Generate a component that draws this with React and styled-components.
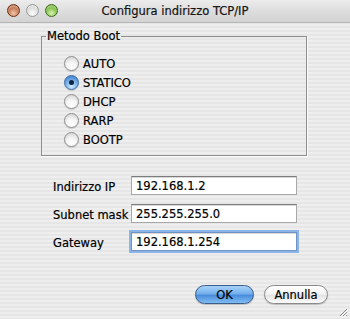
import React from "react";
import styled, { createGlobalStyle, css } from "styled-components";

const bootOptions = ["AUTO", "STATICO", "DHCP", "RARP", "BOOTP"];

const fields = [
  { label: "Indirizzo IP", value: "192.168.1.2" },
  { label: "Subnet mask", value: "255.255.255.0" },
  { label: "Gateway", value: "192.168.1.254", focused: true },
];

export default function App() {
  return (
    <>
      <GlobalStyle />
      <WindowStyle>
        <TitleBarStyle>
          <LightsStyle>
            <LightStyle $color="red" />
            <LightStyle $color="grey" />
            <LightStyle $color="green" />
          </LightsStyle>
          <TitleStyle>Configura indirizzo TCP/IP</TitleStyle>
          <span />
        </TitleBarStyle>

        <BodyStyle>
          <GroupBoxStyle>
            <LegendStyle>Metodo Boot</LegendStyle>
            <RadioListStyle>
              {bootOptions.map((opt) => (
                <RadioRowStyle key={opt}>
                  <RadioStyle $checked={opt === "STATICO"} />
                  {opt}
                </RadioRowStyle>
              ))}
            </RadioListStyle>
          </GroupBoxStyle>

          <FormStyle>
            {fields.map((f) => (
              <React.Fragment key={f.label}>
                <LabelStyle>{f.label}</LabelStyle>
                <FieldStyle readOnly value={f.value} $focused={f.focused} />
              </React.Fragment>
            ))}
          </FormStyle>

          <ButtonRowStyle>
            <ButtonStyle $primary $width={59}>OK</ButtonStyle>
            <ButtonStyle $width={64}>Annulla</ButtonStyle>
          </ButtonRowStyle>
        </BodyStyle>

        <GripStyle>
          <svg width="9" height="9" viewBox="0 0 9 9">
            <path d="M8 1 L1 8 M8 4 L4 8 M8 7 L7 8" stroke="#8a8a8a" strokeWidth="1" />
            <path d="M9 2 L2 9 M9 5 L5 9" stroke="#ffffff" strokeWidth="1" />
          </svg>
        </GripStyle>
      </WindowStyle>
    </>
  );
}

const GlobalStyle = createGlobalStyle`
  html, body {
    margin: 0;
    padding: 0;
  }
  body {
    font-family: "DejaVu Sans", "Liberation Sans", sans-serif;
    color: #000;
    -webkit-text-stroke: 0.2px #000;
  }
`;

const pinstripe = css`
  background: repeating-linear-gradient(
    to bottom,
    #eeeeee 0px,
    #eeeeee 2px,
    #e6e6e6 2px,
    #e6e6e6 4px
  );
  background-attachment: fixed;
`;

const WindowStyle = styled.div`
  position: relative;
  width: 350px;
  height: 319px;
  overflow: hidden;
  display: flex;
  flex-direction: column;
  ${pinstripe}
`;

const TitleBarStyle = styled.div`
  height: 21px;
  display: grid;
  grid-template-columns: 1fr auto 1fr;
  align-items: center;
  padding-bottom: 1px;
  background: linear-gradient(#ececec, #dcdcdc 55%, #d3d3d3);
  border-bottom: 1px solid #b5b5b5;
`;

const LightsStyle = styled.div`
  display: flex;
  gap: 6px;
  padding-left: 7px;
`;

const lightColors = {
  red: ["#f2c6a8", "#b8643f", "#6e3518"],
  grey: ["#ffffff", "#d4d4d4", "#9a9a9a"],
  green: ["#d9f2b0", "#6fb335", "#3d6e1a"],
};

const LightStyle = styled.span`
  width: 13px;
  height: 13px;
  border-radius: 50%;
  box-sizing: border-box;
  border: 1px solid ${(p) => lightColors[p.$color][2]};
  background: radial-gradient(
    circle at 50% 75%,
    ${(p) => lightColors[p.$color][0]} 0%,
    ${(p) => lightColors[p.$color][1]} 70%
  );
  box-shadow: inset 0 2px 1px rgba(255, 255, 255, 0.35);
`;

const TitleStyle = styled.div`
  font-size: 11.5px;
  color: #1a1a1a;
  white-space: nowrap;
  padding-top: 1px;
`;

const BodyStyle = styled.div`
  display: flex;
  flex-direction: column;
  padding-top: 13px;
`;

const GroupBoxStyle = styled.div`
  position: relative;
  margin-left: 41px;
  width: 266px;
  height: 120px;
  box-sizing: border-box;
  border: 1px solid #8e8e8e;
  box-shadow: 1px 1px 0 #fafafa;
`;

const LegendStyle = styled.div`
  position: absolute;
  top: -8px;
  left: 4px;
  padding: 0 1px;
  font-size: 11.5px;
  line-height: 14px;
  ${pinstripe}
`;

const RadioListStyle = styled.div`
  display: flex;
  flex-direction: column;
  padding: 17px 0 0 22px;
`;

const RadioRowStyle = styled.div`
  display: flex;
  align-items: center;
  gap: 4px;
  height: 19px;
  font-size: 11.5px;
`;

const RadioStyle = styled.span`
  position: relative;
  width: 15px;
  height: 15px;
  box-sizing: border-box;
  border-radius: 50%;
  border: 1px solid ${(p) => (p.$checked ? "#3c6ea8" : "#8e8e8e")};
  background: ${(p) =>
    p.$checked
      ? "radial-gradient(circle at 50% 80%, #d2ecff 0%, #7db5ea 45%, #4b89d1 80%)"
      : "radial-gradient(circle at 50% 80%, #ffffff 0%, #f4f4f4 45%, #d3d3d3 90%)"};
  box-shadow: 0 1px 1px rgba(0, 0, 0, 0.15);

  &::after {
    content: "";
    display: ${(p) => (p.$checked ? "block" : "none")};
    position: absolute;
    left: 4px;
    top: 4px;
    width: 5px;
    height: 5px;
    border-radius: 50%;
    background: #0f2440;
  }
`;

const FormStyle = styled.div`
  display: grid;
  grid-template-columns: 78px 166px;
  row-gap: 9px;
  margin: 20px 0 0 53px;
`;

const LabelStyle = styled.div`
  font-size: 11.5px;
  align-self: center;
  padding-top: 3px;
`;

const FieldStyle = styled.input`
  height: 19px;
  box-sizing: border-box;
  width: 166px;
  margin: 0;
  padding: 0 4px;
  font-family: "DejaVu Sans", "Liberation Sans", sans-serif;
  font-size: 11.5px;
  color: #000;
  -webkit-text-stroke: 0.2px #000;
  background: #fff;
  border: 1px solid #a8a8a8;
  border-top-color: #7c7c7c;
  box-shadow: inset 0 1px 0 #d8d8d8;
  outline: none;
  ${(p) =>
    p.$focused &&
    css`
      border-color: #6d93c8;
      box-shadow: 0 0 0 2px #8cb5e6, inset 0 1px 0 #d8d8d8;
    `}
`;

const ButtonRowStyle = styled.div`
  display: flex;
  justify-content: flex-end;
  gap: 10px;
  margin-top: 34px;
  padding-right: 22px;
`;

const ButtonStyle = styled.button`
  width: ${(p) => p.$width}px;
  height: 19px;
  box-sizing: border-box;
  padding: 0;
  border-radius: 10px;
  font-family: "DejaVu Sans", "Liberation Sans", sans-serif;
  font-size: 11.5px;
  color: #000;
  -webkit-text-stroke: 0.2px #000;
  border: 1px solid ${(p) => (p.$primary ? "#3b5d8c" : "#8a8a8a")};
  background: ${(p) =>
    p.$primary
      ? "linear-gradient(#a9d3f8 0%, #74b0ec 45%, #4a8cdc 55%, #7fbdf2 100%)"
      : "linear-gradient(#ffffff 0%, #f4f4f4 45%, #e4e4e4 55%, #fbfbfb 100%)"};
  box-shadow: 0 1px 1px rgba(0, 0, 0, 0.2);
`;

const GripStyle = styled.div`
  position: absolute;
  right: 2px;
  bottom: 2px;
  width: 9px;
  height: 9px;
  display: flex;
`;
